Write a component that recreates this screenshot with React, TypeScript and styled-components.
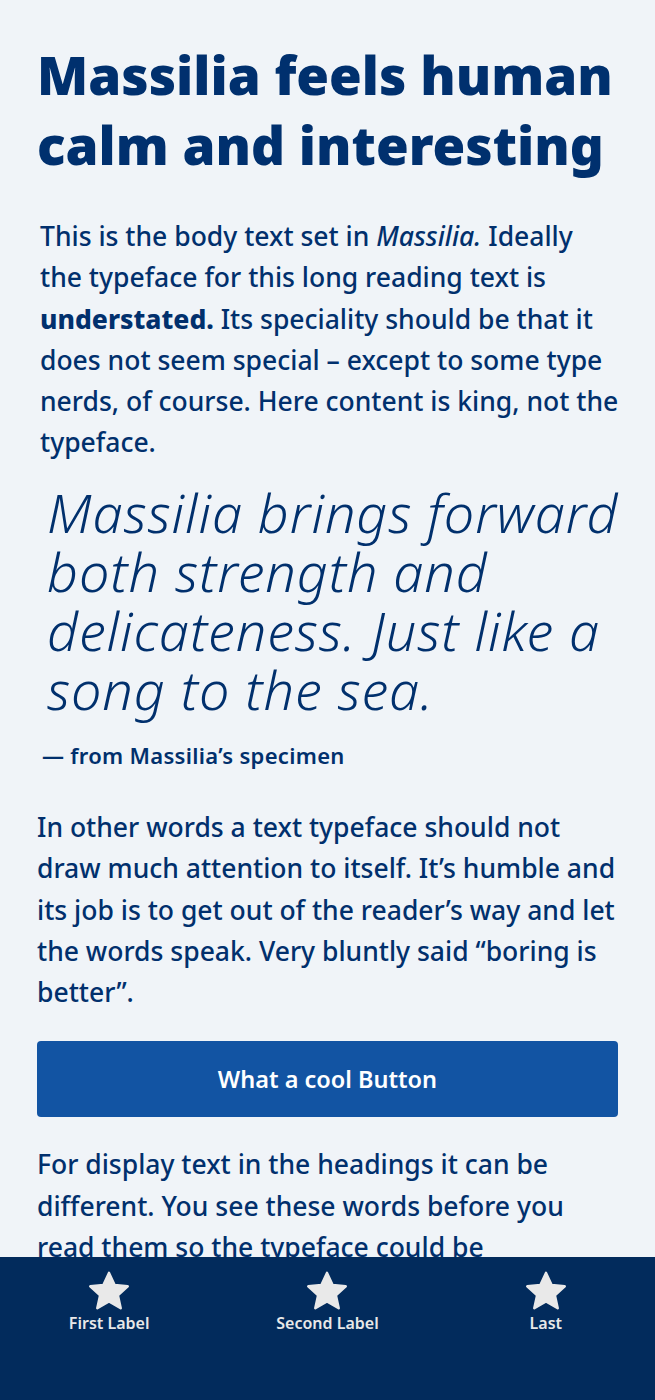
import React from 'react';
import styled, { createGlobalStyle } from 'styled-components';

const GlobalStyle = createGlobalStyle`
  html, body {
    margin: 0;
    padding: 0;
    background: #f0f4f8;
  }
  body {
    font-family: "Noto Sans", "Open Sans", sans-serif;
    color: #01306d;
  }
`;

const Page = styled.main`
  padding: 40px 37px 170px;
`;

const Heading = styled.h1`
  margin: 0;
  font-weight: 900;
  font-size: 53px;
  line-height: 70px;
  color: #00306e;
`;

const Text = styled.p<{ $indent?: number; $top: number }>`
  margin: ${(p) => p.$top}px 0 0;
  padding-left: ${(p) => p.$indent ?? 0}px;
  font-size: 26.5px;
  line-height: 41.25px;
  font-weight: 500;
  white-space: nowrap;

  strong {
    font-weight: 800;
  }
`;

const Quote = styled.figure`
  margin: 19.5px 0 0;
`;

const QuoteText = styled.blockquote`
  margin: 0;
  padding-left: 10px;
  font-style: italic;
  font-weight: 300;
  font-size: 54px;
  line-height: 59px;
  letter-spacing: 0.9px;
  white-space: nowrap;
`;

const Source = styled.figcaption`
  margin-top: 22px;
  padding-left: 5px;
  font-size: 22px;
  line-height: 28px;
  letter-spacing: 0.3px;
  font-weight: 600;
`;

const CoolButton = styled.button`
  display: block;
  width: 100%;
  height: 76px;
  margin-top: 28px;
  border: none;
  border-radius: 4px;
  background: #1254a3;
  color: #ffffff;
  font-family: "Noto Sans", sans-serif;
  font-size: 23.5px;
  font-weight: 600;
  cursor: pointer;
`;

const NavBar = styled.nav`
  position: fixed;
  left: 0;
  right: 0;
  bottom: 0;
  height: 143px;
  background: #022b5c;
  display: grid;
  grid-template-columns: repeat(3, 1fr);
  align-items: start;
`;

const NavItem = styled.a`
  display: flex;
  flex-direction: column;
  align-items: center;
  padding-top: 13px;
  gap: 2px;
  color: #e8e8e8;
  text-decoration: none;
  font-size: 16px;
  line-height: 19px;
  font-weight: 600;
`;

const Star = () => (
  <svg width="44" height="42" viewBox="0 0 24 23" aria-hidden="true">
    <path
      d="M12 1.6l3.05 6.6 7.2.75-5.4 4.85 1.55 7.1L12 17.25l-6.4 3.65 1.55-7.1L1.75 8.95l7.2-.75z"
      fill="#e9e9e9"
      stroke="#e9e9e9"
      strokeWidth="1.4"
      strokeLinejoin="round"
    />
  </svg>
);

const navItems = ['First Label', 'Second Label', 'Last'];

export default function App() {
  return (
    <>
      <GlobalStyle />
      <Page>
        <Heading>Massilia feels human calm and interesting</Heading>
        <Text $indent={3} $top={36}>
          This is the body text set in <em>Massilia.</em> Ideally
          <br />
          the typeface for this long reading text is
          <br />
          <strong>understated.</strong> Its speciality should be that it
          <br />
          does not seem special – except to some type
          <br />
          nerds, of course. Here content is king, not the
          <br />
          typeface.
        </Text>
        <Quote>
          <QuoteText>
            Massilia brings forward
            <br />
            both strength and
            <br />
            delicateness. Just like a
            <br />
            song to the sea.
          </QuoteText>
          <Source>— from Massilia’s specimen</Source>
        </Quote>
        <Text $top={38}>
          In other words a text typeface should not
          <br />
          draw much attention to itself. It’s humble and
          <br />
          its job is to get out of the reader’s way and let
          <br />
          the words speak. Very bluntly said “boring is
          <br />
          better”.
        </Text>
        <CoolButton>What a cool Button</CoolButton>
        <Text $top={27}>
          For display text in the headings it can be
          <br />
          different. You see these words before you
          <br />
          read them so the typeface could be
          <br />
          more expressive and have a stronger
          <br />
          personality.
        </Text>
      </Page>
      <NavBar>
        {navItems.map((label) => (
          <NavItem key={label} href="#">
            <Star />
            {label}
          </NavItem>
        ))}
      </NavBar>
    </>
  );
}
